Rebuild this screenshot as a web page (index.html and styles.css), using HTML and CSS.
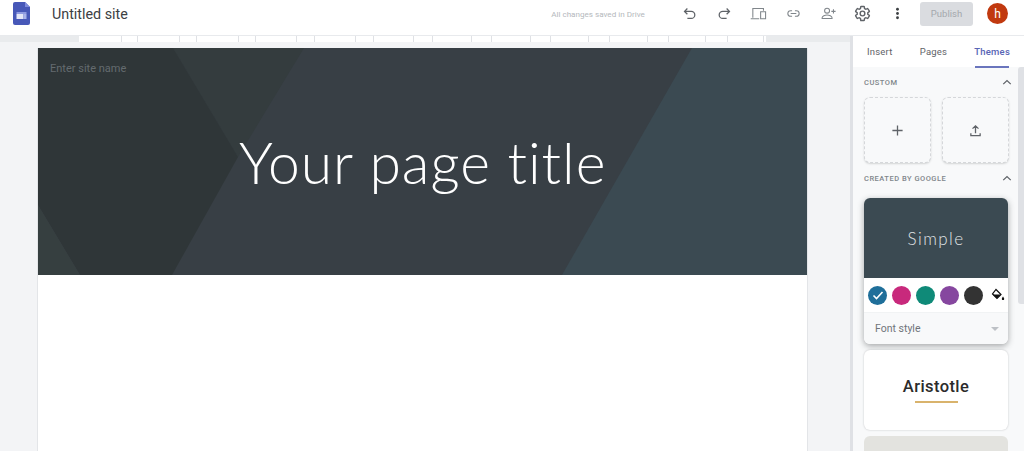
FILE: index.html
```html
<!DOCTYPE html>
<html lang="en">
<head>
    <meta charset="UTF-8">
    <meta name="viewport" content="width=device-width, initial-scale=1.0">
    <title>Untitled site</title>
    <link rel="stylesheet" href="styles.css">
</head>
<body>

<!-- Top bar -->
<header class="topbar">
    <svg class="logo" viewBox="0 0 17 23" width="17" height="23">
        <path d="M2 0h10l5 5v16a2 2 0 0 1-2 2H2a2 2 0 0 1-2-2V2a2 2 0 0 1 2-2z" fill="#4758b8"/>
        <path d="M12 0l5 5h-5z" fill="#7f8cdc"/>
        <rect x="3.500" y="10" width="10" height="2" fill="#8e9ae0"/>
        <rect x="3.500" y="12" width="7" height="5" fill="#e3e6f7"/>
        <rect x="10.500" y="12" width="3" height="5" fill="#a9b3ea"/>
    </svg>
    <span class="site-title">Untitled site</span>
    <span class="saved">All changes saved in Drive</span>
    <div class="tools">
        <svg class="tool" viewBox="0 0 24 24"><path d="M9 5 5 9l4 4M5 9h9.500a5 5 0 0 1 0 10H9"/></svg>
        <svg class="tool" viewBox="0 0 24 24"><path d="M15 5l4 4-4 4M19 9H9.500a5 5 0 0 0 0 10H15"/></svg>
        <svg class="tool tool-light" viewBox="0 0 24 24"><path d="M4 18V5h15v3M1 19.500h12M15 9.500h7v10h-7zM18.500 17.500h.1"/></svg>
        <svg class="tool tool-light" viewBox="0 0 24 24"><path d="M10 8H8a4 4 0 0 0 0 8h2M14 8h2a4 4 0 0 1 0 8h-2M8 12h8"/></svg>
        <svg class="tool tool-light" viewBox="0 0 24 24"><circle cx="10" cy="8" r="3.500"/><path d="M3 19v-1c0-2.500 4-4 7-4s7 1.500 7 4v1zM19 6v6M16 9h6"/></svg>
        <svg class="tool tool-dark" viewBox="0 0 24 24"><path d="M19.430 12.980c.04-.32.07-.64.07-.98s-.03-.66-.07-.98l2.110-1.650c.19-.15.24-.42.12-.64l-2-3.460c-.12-.22-.39-.3-.61-.22l-2.490 1c-.52-.4-1.080-.73-1.690-.98l-.38-2.650C14.460 2.180 14.250 2 14 2h-4c-.25 0-.46.18-.49.42l-.38 2.650c-.61.25-1.170.59-1.690.98l-2.490-1c-.23-.08-.49 0-.61.22l-2 3.460c-.13.22-.07.49.12.64l2.110 1.650c-.04.32-.07.65-.07.98s.03.66.07.98l-2.110 1.650c-.19.15-.24.42-.12.64l2 3.460c.12.22.39.3.61.22l2.490-1c.52.4 1.080.73 1.690.98l.38 2.650c.03.24.24.42.49.42h4c.25 0 .46-.18.49-.42l.38-2.650c.61-.25 1.170-.59 1.690-.98l2.490 1c.23.08.49 0 .61-.22l2-3.460c.12-.22.07-.49-.12-.64z"/><circle cx="12" cy="12" r="3.300"/></svg>
        <svg class="tool tool-dots" viewBox="0 0 24 24"><circle cx="12" cy="6" r="2"/><circle cx="12" cy="12" r="2"/><circle cx="12" cy="18" r="2"/></svg>
    </div>
    <button class="publish">Publish</button>
    <div class="avatar">h</div>
</header>

<div class="main">
    <!-- Editor canvas -->
    <section class="canvas">
        <div class="ruler-row"><div class="ruler"></div></div>
        <div class="page">
            <div class="banner">
                <svg class="banner-art" viewBox="0 0 769 227" preserveAspectRatio="none">
                    <polygon points="135,0 266,0 200,109" fill="#343c3e"/>
                    <polygon points="654,0 769,0 769,227 524,227" fill="#3b4a52"/>
                    <polygon points="0,0 135,0 200,109 134,227 42,227 0,157" fill="#2f3638"/>
                    <polygon points="0,157 42,227 0,227" fill="#363f40"/>
                </svg>
                <div class="site-name">Enter site name</div>
                <h1 class="page-title">Your page title</h1>
            </div>
        </div>
    </section>

    <!-- Side panel -->
    <aside class="panel">
        <nav class="tabs">
            <span class="tab">Insert</span>
            <span class="tab">Pages</span>
            <span class="tab tab-active">Themes</span>
        </nav>
        <div class="panel-body">
            <div class="section-head">
                <span>CUSTOM</span>
                <svg class="chevron" viewBox="0 0 12 8"><path d="M1.500 6 6 1.800 10.500 6"/></svg>
            </div>
            <div class="custom-row">
                <div class="custom-card">
                    <svg class="custom-icon" viewBox="0 0 14 14"><path d="M7 1.500v11M1.500 7h11"/></svg>
                </div>
                <div class="custom-card">
                    <svg class="custom-icon" viewBox="0 0 14 14"><path d="M7 10V2M3.800 5 7 2l3.200 3M2 10v2.500h10V10"/></svg>
                </div>
            </div>
            <div class="section-head">
                <span>CREATED BY GOOGLE</span>
                <svg class="chevron" viewBox="0 0 12 8"><path d="M1.500 6 6 1.800 10.500 6"/></svg>
            </div>

            <div class="theme theme-selected">
                <div class="theme-preview">Simple</div>
                <div class="swatches">
                    <span class="swatch swatch-blue">
                        <svg viewBox="0 0 18 18" width="18" height="18"><path d="M4.500 9.500l3 3 6-6.500"/></svg>
                    </span>
                    <span class="swatch swatch-pink"></span>
                    <span class="swatch swatch-teal"></span>
                    <span class="swatch swatch-purple"></span>
                    <span class="swatch swatch-dark"></span>
                    <span class="swatch swatch-fill">
                        <svg viewBox="0 0 14 14" width="14" height="14">
                            <path d="M5 1.500l5 5-4 4-4.500-4.500z" fill="none" stroke="#111" stroke-width="1.200"/>
                            <path d="M1.500 6.500h8.500l-4 4z" fill="#111"/>
                            <path d="M12 8.500c.8 1.200 1.200 1.800 1.200 2.400a1.200 1.200 0 0 1-2.400 0c0-.6.4-1.200 1.200-2.400z" fill="#111"/>
                        </svg>
                    </span>
                </div>
                <div class="font-style">
                    <span>Font style</span>
                    <span class="caret"></span>
                </div>
            </div>

            <div class="theme theme-aristotle">
                <div class="aristotle-name">Aristotle</div>
                <div class="aristotle-line"></div>
            </div>

            <div class="theme theme-next"></div>
        </div>
        <div class="scrollbar"></div>
    </aside>
</div>

</body>
</html>
```

FILE: styles.css
```css
* {
  box-sizing: border-box;
}
body {
  margin: 0;
  height: 451px;
  overflow: hidden;
  display: flex;
  flex-direction: column;
  font-family: Roboto, "Liberation Sans", sans-serif;
  background-color: #fff;
  color: #3c4043;
}

/* Top bar */
.topbar {
  height: 35px;
  flex: none;
  display: flex;
  align-items: center;
  padding: 0 16px 8px 13px;
  background-color: #fff;
}
.logo {
  flex: none;
}
.site-title {
  margin-left: 22px;
  font-size: 14.300px;
  color: #3c4043;
}
.saved {
  margin-left: auto;
  font-size: 8.100px;
  color: #b4b8bc;
}
.tools {
  display: flex;
  align-items: center;
  margin-left: 36px;
  gap: 17.700px;
}
.tool {
  width: 17px;
  height: 17px;
  fill: none;
  stroke: #5f6368;
  stroke-width: 1.800;
}
.tool-light {
  stroke: #80868b;
  stroke-width: 1.500;
}
.tool-dark {
  stroke-width: 2;
}
.tool-dots {
  fill: #3c4043;
  stroke: none;
}
.publish {
  width: 53px;
  height: 24px;
  margin-left: 14px;
  border: none;
  border-radius: 3px;
  background-color: #dadce0;
  color: #a4a8ad;
  font-family: Roboto, "Liberation Sans", sans-serif;
  font-size: 9.500px;
}
.avatar {
  width: 21px;
  height: 21px;
  margin-left: 14px;
  border-radius: 50%;
  background-color: #c1390f;
  color: #fff;
  font-size: 12px;
  display: flex;
  align-items: center;
  justify-content: center;
}

/* Canvas */
.main {
  flex: 1;
  display: flex;
  min-height: 0;
  border-top: 1px solid #e8eaed;
}
.canvas {
  flex: 1;
  background-color: #f3f4f6;
  overflow: hidden;
}
.ruler-row {
  height: 6px;
  padding-left: 79px;
  background-color: #e9ebed;
}
.ruler {
  width: 687px;
  height: 6px;
  background-color: #fff;
  background-image:
    repeating-linear-gradient(to right, transparent 0, transparent 42px, #dfe1e5 42px, #dfe1e5 43px, transparent 43px, transparent 58.400px),
    repeating-linear-gradient(to right, transparent 0, transparent 58px, #dfe1e5 58px, #dfe1e5 59px, transparent 59px, transparent 58.400px);
}
.page {
  width: 771px;
  height: 403px;
  margin: 6px 0 0 37px;
  background-color: #fff;
  border-left: 1px solid #e3e5e8;
  border-right: 1px solid #e3e5e8;
}
.banner {
  position: relative;
  height: 227px;
  overflow: hidden;
  background-color: #383f45;
  display: flex;
  flex-direction: column;
}
.banner-art {
  position: absolute;
  inset: 0;
  width: 100%;
  height: 100%;
}
.site-name {
  position: relative;
  padding: 14px 0 0 12px;
  font-size: 11px;
  color: #646b6f;
}
.page-title {
  position: relative;
  margin: 52px 0 0 201px;
  font-family: Lato, sans-serif;
  font-weight: 300;
  font-size: 57px;
  line-height: 70px;
  letter-spacing: 1px;
  color: #fff;
  white-space: nowrap;
}

/* Side panel */
.panel {
  position: relative;
  width: 174px;
  flex: none;
  display: flex;
  flex-direction: column;
  background-color: #f8f9fa;
  border-left: 3px solid #dfe1e5;
}
.tabs {
  height: 31px;
  flex: none;
  display: flex;
  align-items: center;
  justify-content: space-between;
  padding: 0 14px;
  background-color: #fff;
}
.tab {
  position: relative;
  font-size: 9.500px;
  letter-spacing: .2px;
  color: #5f6368;
}
.tab-active {
  color: #5865b5;
  font-weight: 500;
}
.tab-active::after {
  content: "";
  position: absolute;
  left: 1px;
  right: 1px;
  bottom: -11px;
  height: 2px;
  background-color: #6a75bd;
}
.panel-body {
  flex: 1;
  padding: 0 0 0 11px;
}
.section-head {
  width: 148px;
  height: 30px;
  display: flex;
  align-items: center;
  justify-content: space-between;
  font-size: 7.500px;
  font-weight: 500;
  letter-spacing: .5px;
  color: #80868b;
}
.chevron {
  width: 10px;
  height: 7px;
  fill: none;
  stroke: #5f6368;
  stroke-width: 1.500;
}
.custom-row {
  display: flex;
  gap: 11px;
}
.custom-card {
  width: 67px;
  height: 66px;
  display: flex;
  align-items: center;
  justify-content: center;
  border: 1px dashed #d5d7da;
  border-radius: 6px;
  box-shadow: 0 1px 2px rgba(60, 64, 67, .2);
  background-color: #f8f9fa;
}
.custom-icon {
  width: 13px;
  height: 13px;
  fill: none;
  stroke: #5f6368;
  stroke-width: 1.400;
}

/* Theme cards */
.theme {
  width: 144px;
  border-radius: 6px;
  background-color: #fff;
  overflow: hidden;
}
.theme-selected {
  margin-top: 5px;
  box-shadow: 0 2px 6px rgba(60, 64, 67, .45);
}
.theme-preview {
  height: 80px;
  display: flex;
  align-items: center;
  justify-content: center;
  background-color: #3b4a52;
  color: #e0e4e6;
  font-family: Lato, sans-serif;
  font-weight: 300;
  font-size: 17px;
  letter-spacing: 1.400px;
}
.swatches {
  height: 35px;
  display: flex;
  align-items: center;
  gap: 5px;
  padding-left: 4px;
  border-bottom: 1px solid #f1f3f4;
  background-color: #fff;
}
.swatch {
  width: 19px;
  height: 19px;
  border-radius: 50%;
  display: flex;
  align-items: center;
  justify-content: center;
}
.swatch svg {
  fill: none;
  stroke: #fff;
  stroke-width: 1.600;
}
.swatch-blue { background-color: #1f6f9a; }
.swatch-pink { background-color: #c8297c; }
.swatch-teal { background-color: #0f8a78; }
.swatch-purple { background-color: #86479f; }
.swatch-dark { background-color: #333; }
.swatch-fill { background-color: #fff; }
.swatch-fill svg { stroke: none; }
.font-style {
  height: 31px;
  display: flex;
  align-items: center;
  justify-content: space-between;
  padding: 0 9px 0 11px;
  font-size: 10.500px;
  color: #70757a;
  background-color: #f8f9fa;
}
.caret {
  border-left: 4px solid transparent;
  border-right: 4px solid transparent;
  border-top: 4px solid #bdc1c6;
}
.theme-aristotle {
  height: 80px;
  margin-top: 6px;
  display: flex;
  flex-direction: column;
  align-items: center;
  justify-content: center;
  box-shadow: 0 0 2px rgba(60, 64, 67, .3);
}
.aristotle-name {
  font-size: 16.500px;
  font-weight: 500;
  letter-spacing: .4px;
  color: #2b2b2b;
}
.aristotle-line {
  width: 43px;
  height: 2px;
  margin-top: 5px;
  background-color: #d9b36c;
}
.theme-next {
  height: 15px;
  margin-top: 6px;
  border-radius: 6px 6px 0 0;
  background-color: #e3e3df;
}
.scrollbar {
  position: absolute;
  top: 31px;
  right: 0;
  width: 6px;
  height: 237px;
  border-radius: 3px 0 0 3px;
  background-color: #dfe1e5;
}
```
